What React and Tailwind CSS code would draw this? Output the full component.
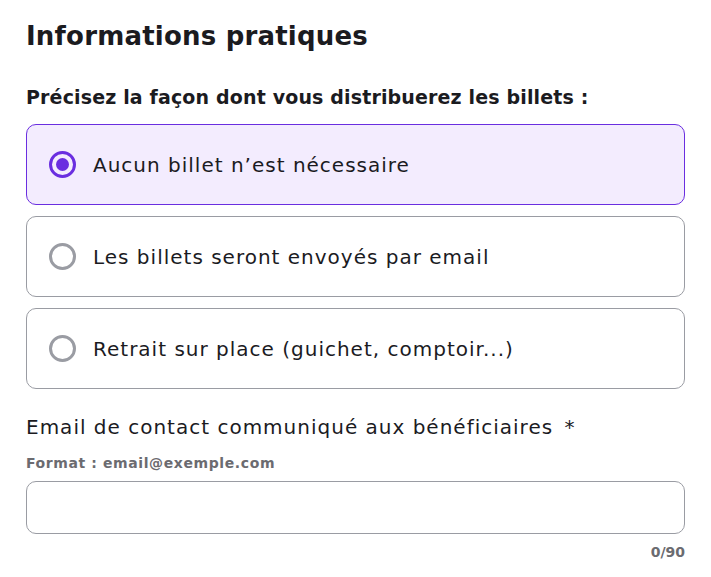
import React, { useState } from 'react';

const options = [
  { id: 'none', label: 'Aucun billet n’est nécessaire' },
  { id: 'email', label: 'Les billets seront envoyés par email' },
  { id: 'onsite', label: 'Retrait sur place (guichet, comptoir...)' },
];

const Radio = ({ checked }) => (
  <span
    className={`flex h-[27px] w-[27px] shrink-0 items-center justify-center rounded-full border-[3px] ${
      checked ? 'border-[#6a2ee0]' : 'border-[#9a9ca3]'
    }`}
  >
    {checked && <span className="h-[13px] w-[13px] rounded-full bg-[#6a2ee0]" />}
  </span>
);

const App = () => {
  const [selected, setSelected] = useState('none');
  const [email, setEmail] = useState('');

  return (
    <div className="min-h-screen bg-white px-[26px] pt-[18px] text-[#1b1b1f]" style={{ fontFamily: '"DejaVu Sans", sans-serif' }}>
      <h1 className="text-[26px] font-bold leading-[36px] tracking-[0.2px]">Informations pratiques</h1>

      <p className="mt-[30px] text-[19px] font-bold leading-[26px] tracking-[0.15px]">
        Précisez la façon dont vous distribuerez les billets :
      </p>

      <div className="mt-[14px] flex flex-col gap-[11px]">
        {options.map((opt) => {
          const checked = selected === opt.id;
          return (
            <label
              key={opt.id}
              onClick={() => setSelected(opt.id)}
              className={`flex h-[81px] cursor-pointer items-center gap-[17px] rounded-[10px] border px-[22px] ${
                checked ? 'border-[#6a2ee0] bg-[#f3ecfe]' : 'border-[#9a9ca3] bg-white'
              }`}
            >
              <Radio checked={checked} />
              <span className="text-[20px] leading-[28px] tracking-[1px]">{opt.label}</span>
            </label>
          );
        })}
      </div>

      <div className="mt-[24px] text-[20px] leading-[28px] tracking-[1px]">
        Email de contact communiqué aux bénéficiaires <span className="ml-[4px]">*</span>
      </div>
      <div className="mt-[12px] text-[14px] font-bold leading-[20px] tracking-[0.6px] text-[#6b6b70]">Format : email@exemple.com</div>
      <input
        value={email}
        onChange={(e) => setEmail(e.target.value)}
        maxLength={90}
        className="mt-[8px] block h-[53px] w-full rounded-[10px] border border-[#9a9ca3] px-4 text-[18px] outline-none"
      />
      <div className="mt-[8px] text-right text-[14px] font-bold leading-[20px] text-[#6b6b70]">{email.length}/90</div>
    </div>
  );
};

export default App;
